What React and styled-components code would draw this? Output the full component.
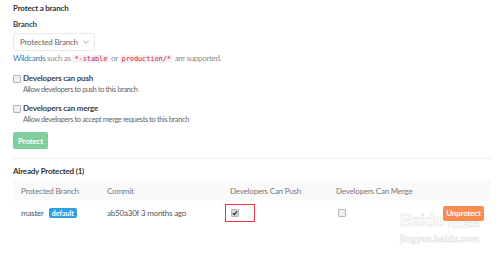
import React from "react";
import styled, { createGlobalStyle } from "styled-components";

const Global = createGlobalStyle`
  html, body { margin: 0; padding: 0; background: #fff; }
  body {
    font-family: Lato, "Noto Sans", sans-serif;
    color: #5c5c5c;
    font-size: 8px;
    letter-spacing: -0.2px;
    white-space: nowrap;
  }
`;

const Page = styled.div`
  position: relative;
  width: 500px;
  height: 256px;
  overflow: hidden;
  padding: 0 9px 0 13px;
  box-sizing: border-box;
`;

const Form = styled.div`
  display: flex;
  flex-direction: column;
  align-items: flex-start;
  padding-top: 3px;
`;

const Title = styled.div`
  font-weight: 700;
  color: #333;
  line-height: 11px;
`;

const Label = styled.div`
  font-weight: 700;
  color: #444;
  margin-top: 5px;
  line-height: 11px;
`;

const Select = styled.div`
  display: flex;
  align-items: center;
  justify-content: space-between;
  width: 82px;
  height: 18px;
  margin-top: 3px;
  box-sizing: border-box;
  padding: 0 5px 0 6px;
  border: 1px solid #eaeaea;
  border-radius: 2px;
  color: #666;
`;

const Hint = styled.div`
  margin-top: 2px;
  line-height: 11px;
  color: #8a8a8a;
  letter-spacing: -0.3px;
  a { color: #3777b0; text-decoration: none; }
`;

const Code = styled.code`
  font-family: "DejaVu Sans Mono", monospace;
  font-size: 7px;
  letter-spacing: -0.1px;
  color: #c7254e;
  background: #f9f2f4;
  padding: 0 2px;
  border-radius: 2px;
`;

const Option = styled.div`
  display: grid;
  grid-template-columns: 10px 1fr;
  margin-top: ${(p) => p.$gap}px;
`;

const Box = styled.span`
  display: inline-block;
  width: 6px;
  height: 6px;
  border: 1px solid #b5b5b5;
  border-radius: 1px;
  background: ${(p) => (p.$checked ? "#d6d6d6" : "#f0f0f0")};
  position: relative;
  align-self: center;
`;

const OptionTitle = styled.div`
  font-weight: 700;
  color: #444;
  line-height: 11px;
`;

const OptionDesc = styled.div`
  grid-column: 2;
  line-height: 11px;
  color: #666;
  font-size: 7.5px;
  letter-spacing: -0.4px;
`;

const Button = styled.div`
  display: inline-flex;
  align-items: center;
  justify-content: center;
  font-weight: 700;
  color: #fff;
  border-radius: 2px;
  background: ${(p) => p.$bg};
  width: ${(p) => p.$w}px;
  height: ${(p) => p.$h}px;
  margin-top: ${(p) => p.$mt ?? 0}px;
  position: relative;
  z-index: 1;
`;

const Divider = styled.div`
  align-self: stretch;
  height: 1px;
  background: #eeeeee;
  margin-top: 9px;
`;

const SubTitle = styled(Title)`
  margin-top: 7px;
`;

const Table = styled.div`
  margin-top: 3px;
  display: grid;
  grid-template-columns: 94px 118px 106px 1fr;
`;

const HeadCell = styled.div`
  background: #fafafa;
  height: 21px;
  display: flex;
  align-items: center;
  padding-left: ${(p) => p.$pl ?? 0}px;
  color: #777;
`;

const Cell = styled.div`
  height: 24px;
  display: flex;
  align-items: center;
  padding-left: ${(p) => p.$pl ?? 0}px;
  justify-content: ${(p) => (p.$end ? "space-between" : "flex-start")};
  color: #555;
`;

const Badge = styled.span`
  background: #2fa0dd;
  color: #fff;
  font-weight: 700;
  font-size: 7px;
  letter-spacing: 0;
  padding: 1px 3px;
  border-radius: 2px;
  margin-left: 5px;
`;

const Highlight = styled.div`
  display: flex;
  align-items: center;
  width: 30px;
  height: 18px;
  box-sizing: border-box;
  border: 1.5px solid #e8353b;
  padding-left: 5px;
`;

const Tick = styled.svg`
  position: absolute;
  left: 0;
  top: 0;
`;

const Watermark = styled.div`
  position: absolute;
  left: 400px;
  top: 212px;
  color: rgba(255, 255, 255, 0.5);
  -webkit-text-stroke: 0.5px #d8d8d8;
  font-family: "Liberation Sans", "Noto Sans CJK SC", sans-serif;
  font-weight: 700;
  letter-spacing: -0.5px;
  pointer-events: none;
  line-height: 1;
  opacity: 0.8;
`;

const MarkBig = styled.div`
  font-size: 17px;
  letter-spacing: -0.8px;
`;

const MarkSmall = styled.div`
  font-size: 9px;
  margin-top: 6px;
  letter-spacing: 0;
`;

function Check({ checked }) {
  return (
    <Box $checked={checked}>
      {checked && (
        <Tick width="6" height="6" viewBox="0 0 6 6">
          <path d="M1 3.2 L2.4 4.6 L5 1.4" stroke="#333" strokeWidth="1.3" fill="none" />
        </Tick>
      )}
    </Box>
  );
}

export default function App() {
  return (
    <Page>
      <Global />
      <Form>
        <Title>Protect a branch</Title>
        <Label>Branch</Label>
        <Select>
          <span>Protected Branch</span>
          <svg width="6" height="4" viewBox="0 0 6 4">
            <path d="M0.5 0.8 L3 3.2 L5.5 0.8" stroke="#aaa" strokeWidth="1" fill="none" />
          </svg>
        </Select>
        <Hint>
          <a>Wildcards</a> such as <Code>*-stable</Code> or <Code>production/*</Code> are supported.
        </Hint>
        <Option $gap={8}>
          <Check />
          <OptionTitle>Developers can push</OptionTitle>
          <OptionDesc>Allow developers to push to this branch</OptionDesc>
        </Option>
        <Option $gap={8}>
          <Check />
          <OptionTitle>Developers can merge</OptionTitle>
          <OptionDesc>Allow developers to accept merge requests to this branch</OptionDesc>
        </Option>
        <Button $bg="#7fcf9e" $w={35} $h={17} $mt={7}>Protect</Button>
        <Divider />
        <SubTitle>Already Protected (1)</SubTitle>
      </Form>
      <Table>
        <HeadCell $pl={8}>Protected Branch</HeadCell>
        <HeadCell>Commit</HeadCell>
        <HeadCell $pl={5}>Developers Can Push</HeadCell>
        <HeadCell $pl={5}>Developers Can Merge</HeadCell>
        <Cell $pl={8}>
          master<Badge>default</Badge>
        </Cell>
        <Cell>ab50a30f 3 months ago</Cell>
        <Cell>
          <Highlight>
            <Check checked />
          </Highlight>
        </Cell>
        <Cell $pl={7} $end>
          <Check />
          <Button $bg="#fc8b4f" $w={41} $h={15} style={{ marginRight: 7 }}>Unprotect</Button>
        </Cell>
      </Table>
      <Watermark>
        <MarkBig>Baidu 经验</MarkBig>
        <MarkSmall>jingyan.baidu.com</MarkSmall>
      </Watermark>
    </Page>
  );
}
